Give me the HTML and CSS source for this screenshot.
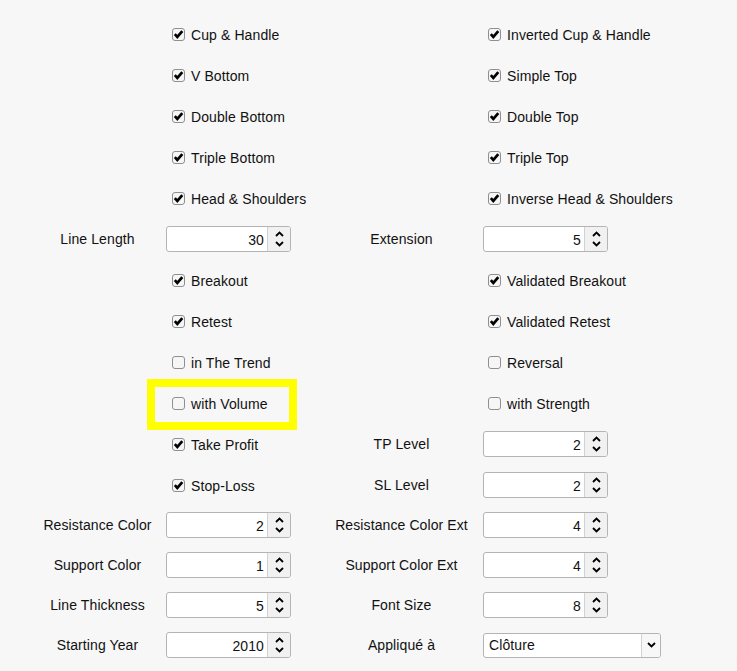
FILE: index.html
```html
<!DOCTYPE html>
<html>
<head>
<meta charset="utf-8">
<link rel="stylesheet" href="styles.css">
</head>
<body>
<div class="form">
  <!-- row 0 -->
  <div></div>
  <label class="cb"><span class="box"><svg viewBox="0 0 11 11"><path d="M1.8 5.2 L4.3 7.9 L9.3 2.2"/></svg></span>Cup &amp; Handle</label>
  <div></div>
  <label class="cb cb-r"><span class="box"><svg viewBox="0 0 11 11"><path d="M1.8 5.2 L4.3 7.9 L9.3 2.2"/></svg></span>Inverted Cup &amp; Handle</label>
  <!-- row 1 -->
  <div></div>
  <label class="cb"><span class="box"><svg viewBox="0 0 11 11"><path d="M1.8 5.2 L4.3 7.9 L9.3 2.2"/></svg></span>V Bottom</label>
  <div></div>
  <label class="cb cb-r"><span class="box"><svg viewBox="0 0 11 11"><path d="M1.8 5.2 L4.3 7.9 L9.3 2.2"/></svg></span>Simple Top</label>
  <!-- row 2 -->
  <div></div>
  <label class="cb"><span class="box"><svg viewBox="0 0 11 11"><path d="M1.8 5.2 L4.3 7.9 L9.3 2.2"/></svg></span>Double Bottom</label>
  <div></div>
  <label class="cb cb-r"><span class="box"><svg viewBox="0 0 11 11"><path d="M1.8 5.2 L4.3 7.9 L9.3 2.2"/></svg></span>Double Top</label>
  <!-- row 3 -->
  <div></div>
  <label class="cb"><span class="box"><svg viewBox="0 0 11 11"><path d="M1.8 5.2 L4.3 7.9 L9.3 2.2"/></svg></span>Triple Bottom</label>
  <div></div>
  <label class="cb cb-r"><span class="box"><svg viewBox="0 0 11 11"><path d="M1.8 5.2 L4.3 7.9 L9.3 2.2"/></svg></span>Triple Top</label>
  <!-- row 4 -->
  <div></div>
  <label class="cb"><span class="box"><svg viewBox="0 0 11 11"><path d="M1.8 5.2 L4.3 7.9 L9.3 2.2"/></svg></span>Head &amp; Shoulders</label>
  <div></div>
  <label class="cb cb-r"><span class="box"><svg viewBox="0 0 11 11"><path d="M1.8 5.2 L4.3 7.9 L9.3 2.2"/></svg></span>Inverse Head &amp; Shoulders</label>
  <!-- row 5 -->
  <div class="lbl">Line Length</div>
  <div class="spin"><span class="val">30</span><span class="btns"><svg class="up" viewBox="0 0 9 6"><polyline points="1,5 4.5,1.5 8,5"/></svg><svg class="dn" viewBox="0 0 9 6"><polyline points="1,1 4.5,4.5 8,1"/></svg></span></div>
  <div class="lbl">Extension</div>
  <div class="spin"><span class="val">5</span><span class="btns"><svg class="up" viewBox="0 0 9 6"><polyline points="1,5 4.5,1.5 8,5"/></svg><svg class="dn" viewBox="0 0 9 6"><polyline points="1,1 4.5,4.5 8,1"/></svg></span></div>
  <!-- row 6 -->
  <div></div>
  <label class="cb"><span class="box"><svg viewBox="0 0 11 11"><path d="M1.8 5.2 L4.3 7.9 L9.3 2.2"/></svg></span>Breakout</label>
  <div></div>
  <label class="cb cb-r"><span class="box"><svg viewBox="0 0 11 11"><path d="M1.8 5.2 L4.3 7.9 L9.3 2.2"/></svg></span>Validated Breakout</label>
  <!-- row 7 -->
  <div></div>
  <label class="cb"><span class="box"><svg viewBox="0 0 11 11"><path d="M1.8 5.2 L4.3 7.9 L9.3 2.2"/></svg></span>Retest</label>
  <div></div>
  <label class="cb cb-r"><span class="box"><svg viewBox="0 0 11 11"><path d="M1.8 5.2 L4.3 7.9 L9.3 2.2"/></svg></span>Validated Retest</label>
  <!-- row 8 -->
  <div></div>
  <label class="cb"><span class="box"></span>in The Trend</label>
  <div></div>
  <label class="cb cb-r"><span class="box"></span>Reversal</label>
  <!-- row 9 -->
  <div></div>
  <label class="cb"><span class="box"></span>with Volume<span class="highlight"></span></label>
  <div></div>
  <label class="cb cb-r"><span class="box"></span>with Strength</label>
  <!-- row 10 -->
  <div></div>
  <label class="cb"><span class="box"><svg viewBox="0 0 11 11"><path d="M1.8 5.2 L4.3 7.9 L9.3 2.2"/></svg></span>Take Profit</label>
  <div class="lbl">TP Level</div>
  <div class="spin"><span class="val">2</span><span class="btns"><svg class="up" viewBox="0 0 9 6"><polyline points="1,5 4.5,1.5 8,5"/></svg><svg class="dn" viewBox="0 0 9 6"><polyline points="1,1 4.5,4.5 8,1"/></svg></span></div>
  <!-- row 11 -->
  <div></div>
  <label class="cb"><span class="box"><svg viewBox="0 0 11 11"><path d="M1.8 5.2 L4.3 7.9 L9.3 2.2"/></svg></span>Stop-Loss</label>
  <div class="lbl">SL Level</div>
  <div class="spin"><span class="val">2</span><span class="btns"><svg class="up" viewBox="0 0 9 6"><polyline points="1,5 4.5,1.5 8,5"/></svg><svg class="dn" viewBox="0 0 9 6"><polyline points="1,1 4.5,4.5 8,1"/></svg></span></div>
  <!-- row 12 -->
  <div class="lbl">Resistance Color</div>
  <div class="spin"><span class="val">2</span><span class="btns"><svg class="up" viewBox="0 0 9 6"><polyline points="1,5 4.5,1.5 8,5"/></svg><svg class="dn" viewBox="0 0 9 6"><polyline points="1,1 4.5,4.5 8,1"/></svg></span></div>
  <div class="lbl">Resistance Color Ext</div>
  <div class="spin"><span class="val">4</span><span class="btns"><svg class="up" viewBox="0 0 9 6"><polyline points="1,5 4.5,1.5 8,5"/></svg><svg class="dn" viewBox="0 0 9 6"><polyline points="1,1 4.5,4.5 8,1"/></svg></span></div>
  <!-- row 13 -->
  <div class="lbl">Support Color</div>
  <div class="spin"><span class="val">1</span><span class="btns"><svg class="up" viewBox="0 0 9 6"><polyline points="1,5 4.5,1.5 8,5"/></svg><svg class="dn" viewBox="0 0 9 6"><polyline points="1,1 4.5,4.5 8,1"/></svg></span></div>
  <div class="lbl">Support Color Ext</div>
  <div class="spin"><span class="val">4</span><span class="btns"><svg class="up" viewBox="0 0 9 6"><polyline points="1,5 4.5,1.5 8,5"/></svg><svg class="dn" viewBox="0 0 9 6"><polyline points="1,1 4.5,4.5 8,1"/></svg></span></div>
  <!-- row 14 -->
  <div class="lbl">Line Thickness</div>
  <div class="spin"><span class="val">5</span><span class="btns"><svg class="up" viewBox="0 0 9 6"><polyline points="1,5 4.5,1.5 8,5"/></svg><svg class="dn" viewBox="0 0 9 6"><polyline points="1,1 4.5,4.5 8,1"/></svg></span></div>
  <div class="lbl">Font Size</div>
  <div class="spin"><span class="val">8</span><span class="btns"><svg class="up" viewBox="0 0 9 6"><polyline points="1,5 4.5,1.5 8,5"/></svg><svg class="dn" viewBox="0 0 9 6"><polyline points="1,1 4.5,4.5 8,1"/></svg></span></div>
  <!-- row 15 -->
  <div class="lbl">Starting Year</div>
  <div class="spin"><span class="val">2010</span><span class="btns"><svg class="up" viewBox="0 0 9 6"><polyline points="1,5 4.5,1.5 8,5"/></svg><svg class="dn" viewBox="0 0 9 6"><polyline points="1,1 4.5,4.5 8,1"/></svg></span></div>
  <div class="lbl">Appliqué à</div>
  <div class="combo"><span class="ctext">Clôture</span><span class="cbtn"><svg viewBox="0 0 9 6"><polyline points="1,1 4.5,4.5 8,1"/></svg></span></div>
</div>
</body>
</html>
```
FILE: styles.css
```css
html, body {
  margin: 0;
  padding: 0;
  background: #f7f7f7;
}
body {
  font-family: "Liberation Sans", Arial, sans-serif;
  font-size: 14px;
  letter-spacing: 0.1px;
  color: #111;
}
.form {
  display: grid;
  grid-template-columns: 137px 154px 163px 1fr;
  grid-template-rows: repeat(12, 41px) repeat(4, 40px);
  padding: 13px 0 0 29px;
  align-items: center;
}
.lbl {
  text-align: center;
  white-space: nowrap;
}
.cb {
  align-self: stretch;
  display: flex;
  align-items: center;
  gap: 6px;
  padding-left: 6px;
  padding-top: 2px;
  white-space: nowrap;
  position: relative;
}
.cb-r {
  padding-left: 5px;
}
.box {
  width: 13px;
  height: 13px;
  box-sizing: border-box;
  border: 1px solid #8f8f8f;
  border-radius: 3px;
  background: #f6f6f6;
  display: flex;
  flex: none;
}
.box svg {
  width: 11px;
  height: 11px;
  display: block;
}
.box svg path {
  fill: none;
  stroke: #000;
  stroke-width: 2.7;
  stroke-linecap: butt;
  stroke-linejoin: miter;
}
.highlight {
  position: absolute;
  left: -19px;
  top: -3px;
  width: 150px;
  height: 51px;
  box-sizing: border-box;
  border: 8px solid #ffff00;
  pointer-events: none;
}
.spin {
  display: flex;
  width: 125px;
  height: 26px;
  box-sizing: border-box;
  border: 1px solid #b4b4b4;
  border-radius: 3px;
  background: #fff;
  overflow: hidden;
}
.val {
  flex: 1;
  text-align: right;
  padding-right: 3px;
  line-height: 25px;
  padding-top: 1px;
}
.btns {
  width: 22px;
  flex: none;
  border-left: 1px solid #d2d2d2;
  background: #f1f1f1;
  display: flex;
  flex-direction: column;
  align-items: center;
  justify-content: center;
  gap: 4px;
}
.btns svg, .cbtn svg {
  width: 9px;
  height: 6px;
  display: block;
}
.btns polyline, .cbtn polyline {
  fill: none;
  stroke: #000;
  stroke-width: 1.8;
}
.combo {
  display: flex;
  width: 178px;
  height: 25px;
  box-sizing: border-box;
  border: 1px solid #b4b4b4;
  border-radius: 3px;
  background: #fff;
  overflow: hidden;
}
.ctext {
  flex: 1;
  padding-left: 5px;
  line-height: 23px;
}
.cbtn {
  width: 18px;
  flex: none;
  border-left: 1px solid #d2d2d2;
  background: #f7f7f7;
  display: flex;
  align-items: center;
  justify-content: center;
}
```
